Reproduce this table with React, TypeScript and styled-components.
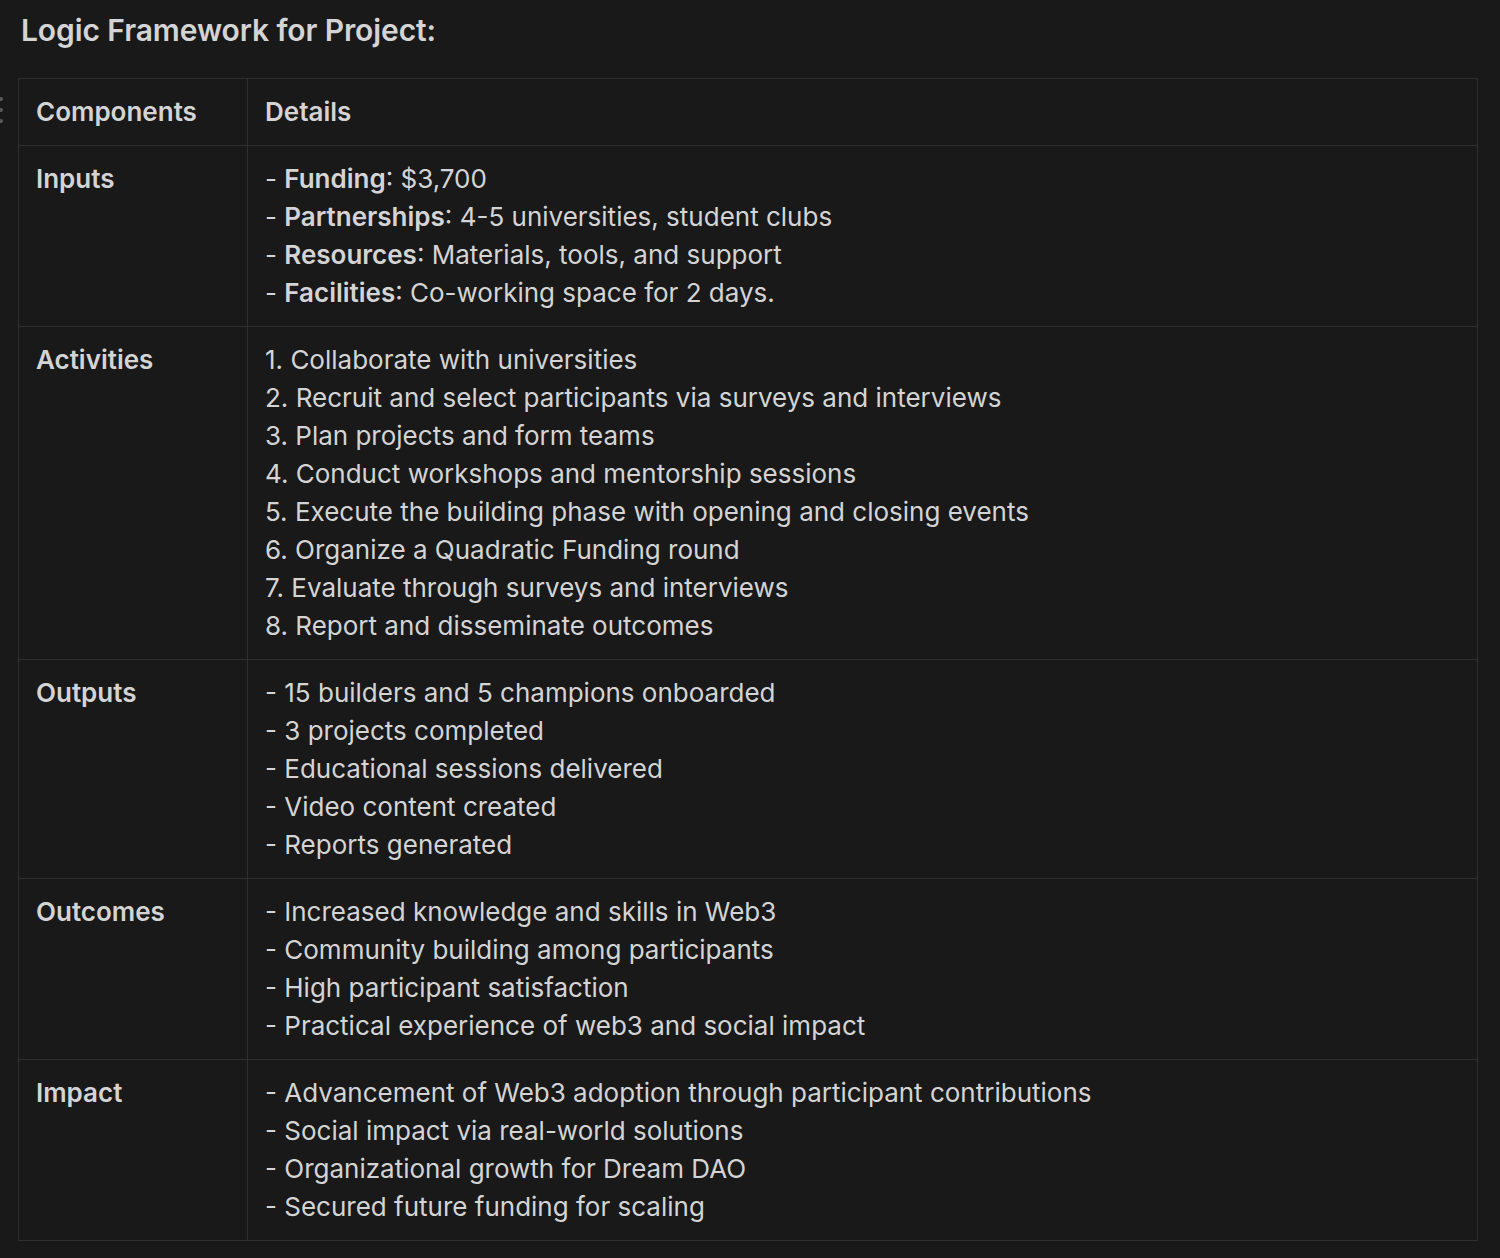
import React from "react";
import styled, { createGlobalStyle } from "styled-components";

const Global = createGlobalStyle`
  html, body { margin: 0; padding: 0; background: #191919; }
  body { font-family: Inter, "Noto Sans", sans-serif; color: #d4d4d4; }
`;

const Page = styled.div`
  padding: 11px 22px 16px 18px;
  min-height: 1258px;
  box-sizing: border-box;
  background: #191919;
`;

const Title = styled.h2`
  margin: 0 0 29px 3px;
  font-size: 30px;
  line-height: 38px;
  font-weight: 600;
  color: #d4d4d4;
  letter-spacing: -0.1px;
`;

const TableWrap = styled.div`
  position: relative;
`;

const Handle = styled.svg`
  position: absolute;
  left: -18px;
  top: 18px;
`;

const Table = styled.table`
  width: 100%;
  border-collapse: collapse;
  table-layout: fixed;
  font-size: 26px;
  line-height: 38px;
`;

const Cell = styled.td<{ $head?: boolean }>`
  border: 1px solid #2f2f2f;
  padding: 14px 17px;
  vertical-align: top;
  font-weight: ${(p) => (p.$head ? 600 : 400)};
  color: #d4d4d4;
`;

const Line = styled.div`
  white-space: nowrap;
`;

const B = styled.b`
  font-weight: 600;
`;

type Row = { label: string; lines: React.ReactNode[] };

const rows: Row[] = [
  {
    label: "Inputs",
    lines: [
      <>- <B>Funding</B>: $3,700</>,
      <>- <B>Partnerships</B>: 4-5 universities, student clubs</>,
      <>- <B>Resources</B>: Materials, tools, and support</>,
      <>- <B>Facilities</B>: Co-working space for 2 days.</>,
    ],
  },
  {
    label: "Activities",
    lines: [
      "1. Collaborate with universities",
      "2. Recruit and select participants via surveys and interviews",
      "3. Plan projects and form teams",
      "4. Conduct workshops and mentorship sessions",
      "5. Execute the building phase with opening and closing events",
      "6. Organize a Quadratic Funding round",
      "7. Evaluate through surveys and interviews",
      "8. Report and disseminate outcomes",
    ],
  },
  {
    label: "Outputs",
    lines: [
      "- 15 builders and 5 champions onboarded",
      "- 3 projects completed",
      "- Educational sessions delivered",
      "- Video content created",
      "- Reports generated",
    ],
  },
  {
    label: "Outcomes",
    lines: [
      "- Increased knowledge and skills in Web3",
      "- Community building among participants",
      "- High participant satisfaction",
      "- Practical experience of web3 and social impact",
    ],
  },
  {
    label: "Impact",
    lines: [
      "- Advancement of Web3 adoption through participant contributions",
      "- Social impact via real-world solutions",
      "- Organizational growth for Dream DAO",
      "- Secured future funding for scaling",
    ],
  },
];

export default function App() {
  return (
    <>
      <Global />
      <Page>
        <Title>Logic Framework for Project:</Title>
        <TableWrap>
          <Handle width="6" height="30" viewBox="0 0 6 30">
            <circle cx="1" cy="3" r="2" fill="#5a5a5a" />
            <circle cx="1" cy="14" r="2" fill="#5a5a5a" />
            <circle cx="1" cy="25" r="2" fill="#5a5a5a" />
          </Handle>
          <Table>
            <colgroup>
              <col style={{ width: 229 }} />
              <col />
            </colgroup>
            <tbody>
              <tr>
                <Cell $head>Components</Cell>
                <Cell $head>Details</Cell>
              </tr>
              {rows.map((r) => (
                <tr key={r.label}>
                  <Cell $head>{r.label}</Cell>
                  <Cell>
                    {r.lines.map((l, i) => (
                      <Line key={i}>{l}</Line>
                    ))}
                  </Cell>
                </tr>
              ))}
            </tbody>
          </Table>
        </TableWrap>
      </Page>
    </>
  );
}
